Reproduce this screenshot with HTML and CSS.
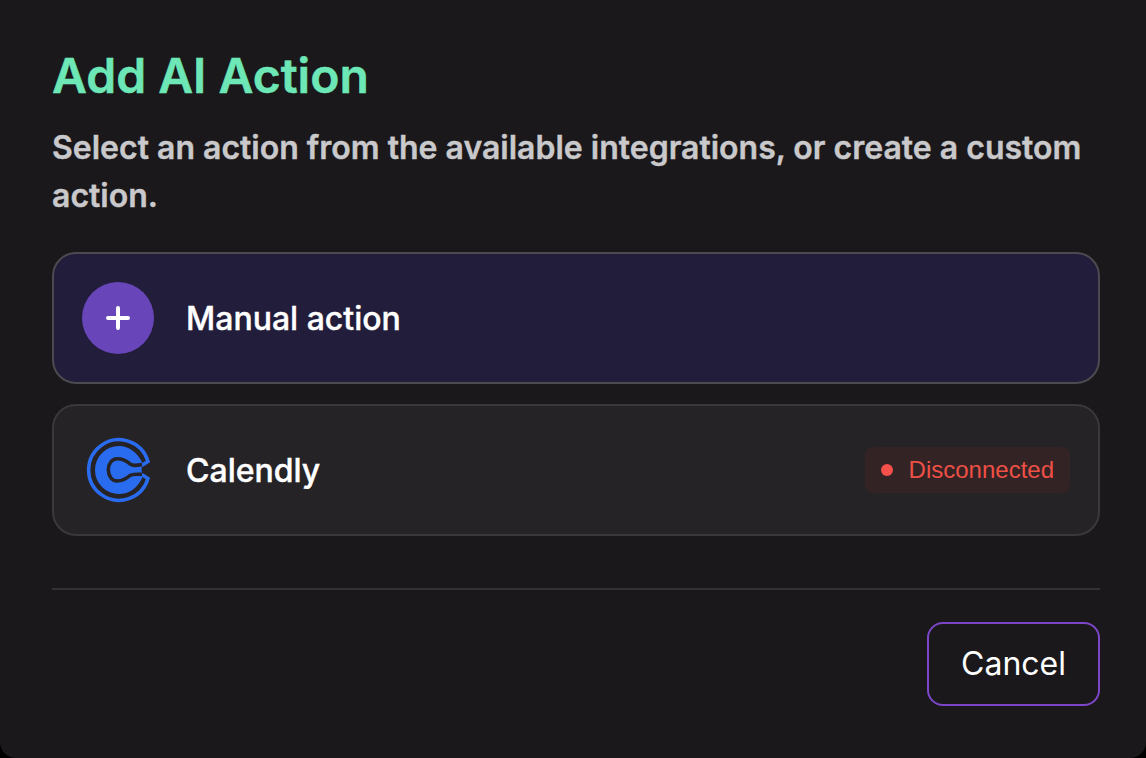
FILE: index.html
```html
<!DOCTYPE html>
<html lang="en">
<head>
<meta charset="utf-8">
<title>Add AI Action</title>
<link rel="stylesheet" href="styles.css">
</head>
<body>
<main class="dialog">
  <h1 class="title">Add AI Action</h1>
  <p class="subtitle">Select an action from the available integrations, or create a custom action.</p>
  <div class="list">
    <div class="row row-manual">
      <span class="plus-circle">
        <svg class="plus" viewBox="0 0 24 24" width="24" height="24" fill="none" stroke="#fff" stroke-width="4" stroke-linecap="round"><path d="M12 2v20M2 12h20"/></svg>
      </span>
      <span class="row-label">Manual action</span>
    </div>
    <div class="row row-integration">
      <svg class="logo" viewBox="0 0 72 72" width="72" height="72" fill="none">
        <path d="M59.700 31.500L66 27.500A30.300 30.300 0 1 0 66 44.500L59.700 40.500" stroke="#2a6cf0" stroke-width="3.500"/>
        <path d="M60.500 29C56 19 47 12 37 12A24 24 0 0 0 37 60C47 60 56 54 60.500 43L59.500 35.500Z" fill="#2a6cf0"/>
        <path d="M60 30.500C54 31.500 51 32 48 30C44 26 39 24.700 35 24.700C30 24.700 26.300 30 26.300 35.500C26.300 42 30 47 35 47C39 47 44 45 48 41.500C51 39.500 54 40 60 40.500" stroke="#262327" stroke-width="3.500"/>
      </svg>
      <span class="row-label">Calendly</span>
      <span class="badge"><span class="badge-dot"></span>Disconnected</span>
    </div>
  </div>
  <hr class="divider">
  <div class="actions">
    <button class="cancel" type="button">Cancel</button>
  </div>
</main>
</body>
</html>
```
FILE: styles.css
```css
* {
  box-sizing: border-box;
}

html,
body {
  margin: 0;
  height: 100%;
  background: #000;
}

body {
  font-family: Inter, "Liberation Sans", sans-serif;
  color: #fff;
}

.dialog {
  height: 758px;
  padding: 46px 46px 0 52px;
  background: #1a181b;
  border-radius: 0 0 16px 16px;
}

.title {
  margin: 0;
  font-size: 48px;
  line-height: 60px;
  font-weight: 600;
  color: #6ee7b7;
  -webkit-text-stroke: 0.5px #6ee7b7;
}

.subtitle {
  margin: 18px 0 0;
  font-size: 32px;
  line-height: 48px;
  font-weight: 600;
  color: #c9c8ca;
  -webkit-text-stroke: 0.4px #c9c8ca;
}

.list {
  margin-top: 32px;
  display: flex;
  flex-direction: column;
  gap: 20px;
}

.row {
  height: 132px;
  padding: 0 28px;
  display: flex;
  align-items: center;
  gap: 32px;
  border-radius: 24px;
}

.row-manual {
  background: #211d3a;
  border: 2px solid #4c4a50;
}

.row-integration {
  background: #262327;
  border: 2px solid #3a383c;
}

.plus-circle {
  width: 72px;
  height: 72px;
  flex: none;
  display: flex;
  align-items: center;
  justify-content: center;
  border-radius: 50%;
  background: #6845b9;
}

.logo {
  flex: none;
}

.row-label {
  font-size: 32px;
  font-weight: 500;
  color: #fff;
  -webkit-text-stroke: 0.4px #fff;
}

.badge {
  margin-left: auto;
  height: 46px;
  padding: 0 16px;
  display: flex;
  align-items: center;
  gap: 16px;
  border-radius: 8px;
  background: #332325;
  color: #ed5045;
  font-family: "Liberation Sans", Arial, sans-serif;
  font-size: 24px;
}

.badge-dot {
  width: 12px;
  height: 12px;
  border-radius: 50%;
  background: #f5504a;
}

.divider {
  margin: 52px 0 0;
  height: 2px;
  border: 0;
  background: #333135;
}

.actions {
  margin-top: 32px;
  display: flex;
  justify-content: flex-end;
}

.cancel {
  width: 173px;
  height: 84px;
  padding: 0 0 2px;
  border: 2.5px solid #7b47c8;
  border-radius: 16px;
  background: transparent;
  color: #fff;
  font-family: inherit;
  font-size: 32px;
  font-weight: 400;
}
```
